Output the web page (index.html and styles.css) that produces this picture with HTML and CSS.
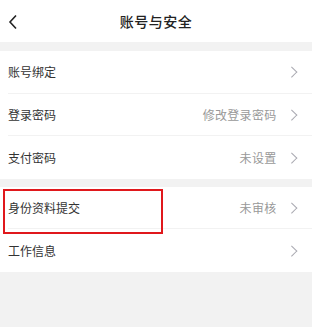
FILE: index.html
```html
<!DOCTYPE html>
<html lang="zh-CN">
<head>
    <meta charset="UTF-8">
    <meta name="viewport" content="width=device-width, initial-scale=1.0">
    <title>账号与安全</title>
    <link rel="stylesheet" href="styles.css">
</head>
<body>
    <div class="page">
        <div class="nav-bar">
            <svg class="back-icon" width="10" height="16" viewBox="0 0 10 16">
                <path d="M8 1.5 L2 8 L8 14.5" fill="none" stroke="#222" stroke-width="1.6"/>
            </svg>
            <h1>账号与安全</h1>
        </div>

        <div class="group">
            <div class="row">
                <span class="row-label">账号绑定</span>
                <span class="row-arrow"></span>
            </div>
            <div class="row">
                <span class="row-label">登录密码</span>
                <span class="row-value">修改登录密码</span>
                <span class="row-arrow"></span>
            </div>
            <div class="row">
                <span class="row-label">支付密码</span>
                <span class="row-value">未设置</span>
                <span class="row-arrow"></span>
            </div>
        </div>

        <div class="group">
            <div class="row">
                <span class="row-label">身份资料提交</span>
                <span class="row-value">未审核</span>
                <span class="row-arrow"></span>
                <div class="highlight-box"></div>
            </div>
            <div class="row">
                <span class="row-label">工作信息</span>
                <span class="row-arrow"></span>
            </div>
        </div>
    </div>
</body>
</html>
```

FILE: styles.css
```css
body {
    margin: 0;
    background: #fff;
    font-family: "Noto Sans CJK SC", "Noto Sans", sans-serif;
}

.page {
    width: 312px;
    height: 327px;
    background: #f2f2f2;
}

.nav-bar {
    position: relative;
    height: 42px;
    background: #fff;
    display: flex;
    align-items: center;
    justify-content: center;
}

.nav-bar h1 {
    margin: 0;
    font-size: 14px;
    font-weight: 500;
    color: #222;
    letter-spacing: 0.5px;
}

.back-icon {
    position: absolute;
    left: 8px;
    top: 14px;
}

.group {
    margin-top: 9px;
    background: #fff;
}

.group + .group {
    margin-top: 8px;
}

.row {
    position: relative;
    height: 42.5px;
    margin-left: 8px;
    padding-right: 17px;
    display: flex;
    align-items: center;
    border-bottom: 1px solid #f2f2f2;
    box-sizing: border-box;
}

.row:last-child {
    border-bottom: none;
}

.row-label {
    flex: 1;
    font-size: 12px;
    color: #333;
}

.row-value {
    font-size: 12px;
    color: #999;
    letter-spacing: 0.3px;
    margin-right: 11px;
}

.row-arrow {
    width: 6.5px;
    height: 6.5px;
    border-top: 1px solid #a8a8b0;
    border-right: 1px solid #a8a8b0;
    transform: rotate(45deg);
}

.highlight-box {
    position: absolute;
    left: -5px;
    top: 2px;
    width: 160px;
    height: 45px;
    border: 2.5px solid #e0181c;
    box-sizing: border-box;
}
```
